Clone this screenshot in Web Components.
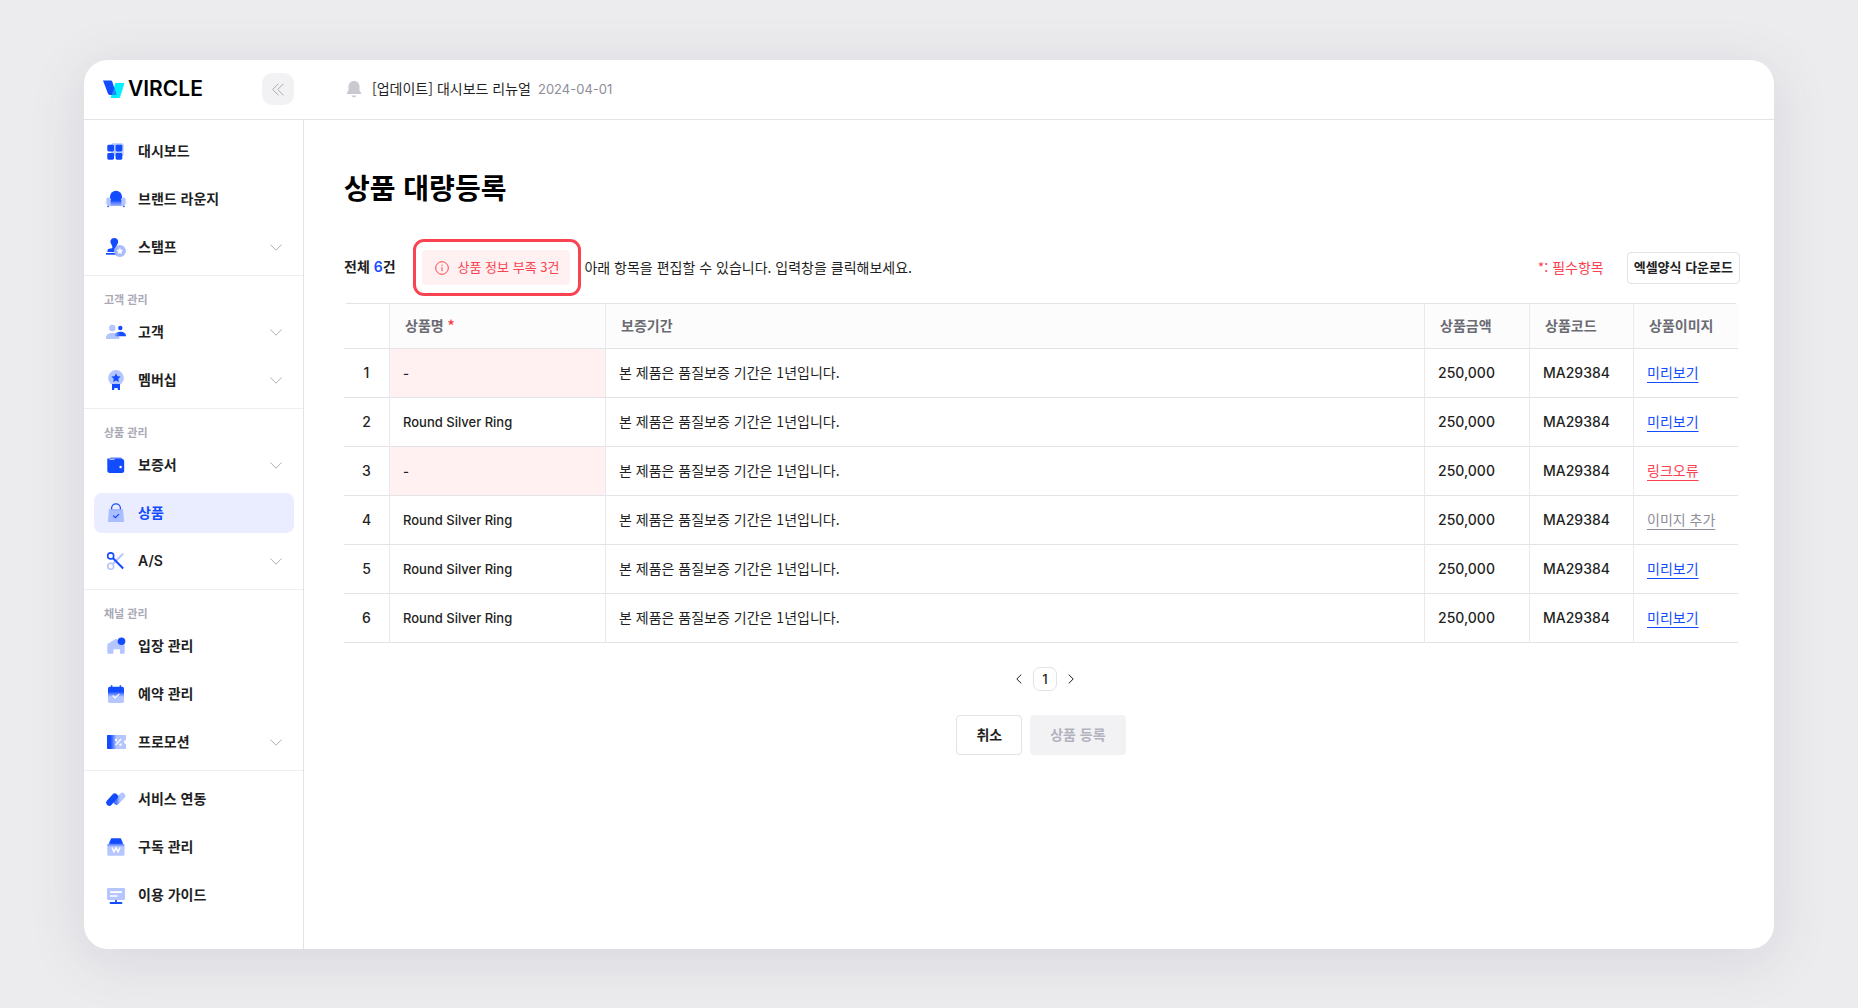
<!DOCTYPE html>
<html lang="ko">
<head>
<meta charset="utf-8">
<meta name="viewport" content="width=device-width, initial-scale=1">
<title>VIRCLE</title>
<style>
  html, body { margin: 0; height: 100%; }
  body {
    --kr: "Noto Sans CJK KR", "Noto Sans", sans-serif;
    --latin: Inter, "Noto Sans CJK KR", sans-serif;
    --ink: #1f1f24;
    --blue: #134bff;
    --red: #fa4350;
    --line: #e2e2e7;
    --gray: #8e8e99;
    font: 14px/20px var(--kr);
    color: var(--ink);
    background: #ececee;
  }
</style>
</head>
<body>
<vc-app>
  <vc-topbar slot="top"></vc-topbar>
  <vc-sidebar slot="side">
    <vc-nav-group>
      <vc-nav-item icon="dashboard">대시보드</vc-nav-item>
      <vc-nav-item icon="lounge">브랜드 라운지</vc-nav-item>
      <vc-nav-item icon="stamp" expandable>스탬프</vc-nav-item>
    </vc-nav-group>
    <vc-nav-group label="고객 관리">
      <vc-nav-item icon="customers" expandable>고객</vc-nav-item>
      <vc-nav-item icon="membership" expandable>멤버십</vc-nav-item>
    </vc-nav-group>
    <vc-nav-group label="상품 관리">
      <vc-nav-item icon="wallet" expandable>보증서</vc-nav-item>
      <vc-nav-item icon="bag" current>상품</vc-nav-item>
      <vc-nav-item icon="scissors" expandable latin>A/S</vc-nav-item>
    </vc-nav-group>
    <vc-nav-group label="채널 관리">
      <vc-nav-item icon="house">입장 관리</vc-nav-item>
      <vc-nav-item icon="calendar">예약 관리</vc-nav-item>
      <vc-nav-item icon="ticket" expandable>프로모션</vc-nav-item>
    </vc-nav-group>
    <vc-nav-group>
      <vc-nav-item icon="link">서비스 연동</vc-nav-item>
      <vc-nav-item icon="subscribe">구독 관리</vc-nav-item>
      <vc-nav-item icon="guide">이용 가이드</vc-nav-item>
    </vc-nav-group>
  </vc-sidebar>
  <vc-bulk-page>
    <span slot="title">상품 대량등록</span>
    <vc-toolbar slot="toolbar" total="6" missing="3"></vc-toolbar>
    <vc-product-table slot="table"></vc-product-table>
    <vc-pagination slot="pages" page="1"></vc-pagination>
    <vc-button slot="actions">취소</vc-button>
    <vc-button slot="actions" disabled>상품 등록</vc-button>
  </vc-bulk-page>
</vc-app>

<script>
const B = '#134bff', L = '#b5c6ff';
const ICONS = {
  dashboard: `<rect x="5" y="2.3" width="12.6" height="13" rx="2" fill="${L}"/><g fill="${B}"><rect x="1.3" y="3.7" width="6.7" height="6.7" rx="1.4"/><rect x="9.6" y="3.7" width="6.7" height="6.7" rx="1.4"/><rect x="1.3" y="12" width="6.7" height="6.7" rx="1.4"/><rect x="9.6" y="12" width="6.7" height="6.7" rx="1.4"/></g>`,
  lounge: `<defs><linearGradient id="g" x1="0" y1="0" x2="0" y2="1"><stop offset="0" stop-color="${B}"/><stop offset=".45" stop-color="#5a80ff"/><stop offset="1" stop-color="#9db3ff"/></linearGradient></defs><path d="M4 12V7.8a6 6 0 0 1 12 0V12z" fill="${B}"/><path d="M.3 10.6C.3 9.2 1.4 8.6 2.6 8.6S5 9.4 5 10.6V17H2.4C1.2 17 .6 16.2 .3 14z" fill="${L}"/><path d="M19.7 10.6C19.7 9.2 18.6 8.6 17.4 8.6S15 9.4 15 10.6V17h2.6c1.2 0 1.8-.8 2.1-3z" fill="${L}"/><rect x="4.6" y="11.3" width="10.8" height="5.7" fill="url(#g)"/><rect x="1.3" y="16.8" width="1.7" height="1.5" rx=".7" fill="${B}"/><rect x="17" y="16.8" width="1.7" height="1.5" rx=".7" fill="${B}"/>`,
  stamp: `<path d="M8.300 .9c2.200 0 3.900 1.700 3.900 3.800 0 1.800-1.300 2.600-1.700 4.300l-.3 2.500v3.500H1.400v-1.200c0-1.500 1.100-2.400 2.600-2.400h1.200c.9 0 1.300-.5 1.200-1.400C6.200 7.700 4.400 6.700 4.400 4.700c0-2.100 1.700-3.800 3.900-3.800z" fill="${B}"/><rect y="16" width="10.500" height="1.700" fill="${B}"/><circle cx="13.900" cy="14" r="6" fill="#9fb5ff" opacity=".9"/><path d="m13.900 10.700 1 2.100 2.300.3-1.700 1.600.4 2.300-2-1.100-2 1.100.4-2.300-1.700-1.600 2.300-.3z" fill="#fff"/>`,
  customers: `<defs><linearGradient id="g"><stop offset="0" stop-color="#8fa8ff"/><stop offset=".5" stop-color="${B}"/></linearGradient></defs><circle cx="6.300" cy="6" r="3.200" fill="${L}"/><path d="M0 17v-1.500C0 12.500 2.500 11 6.500 11s6.800 1.500 6.800 4.500V17z" fill="${L}"/><circle cx="14.300" cy="6" r="2.200" fill="${B}"/><path d="M8.600 14.300c0-3 2-4.600 5.600-4.600s5.800 1.600 5.800 4.600z" fill="url(#g)"/>`,
  membership: `<circle cx="10" cy="7.900" r="7.800" fill="${L}"/><path d="m10 3.200 1.400 3 3.200.4-2.300 2.200.5 3.300-2.800-1.600-2.800 1.600.5-3.300-2.300-2.200 3.200-.4z" fill="${B}"/><path d="M6 14h8v6h-2l-.5-2h-3L8 20H6z" fill="${B}"/>`,
  wallet: `<rect x="3.500" y="2.200" width="12.500" height="6" rx="1.500" fill="#8fa8ff"/><path d="M1.300 4.200c0-1 1.700-.6 2.700-.6h10.500c2.300 0 3.700 1 3.700 3V15.800c0 1.500-.9 2.200-2.200 2.200H3.700c-1.500 0-2.400-.8-2.400-2.400z" fill="${B}"/><path d="M3.500 4.300h5" stroke="#fff" stroke-width=".8"/><circle cx="14.600" cy="12" r="1.200" fill="#fff"/>`,
  bag: `<defs><linearGradient id="g" x1="0" y1="0" x2="0" y2="1"><stop offset="0" stop-color="#7090ff"/><stop offset=".45" stop-color="#aabdff"/></linearGradient></defs><path d="M5.600 9V5.200a4.400 4.400 0 0 1 8.800 0V9" fill="none" stroke="${B}" stroke-width="1.300"/><path d="M2.900 6.300h14.200l.9 11.400c0 .8-.4 1.300-1.200 1.300H3.200c-.8 0-1.200-.5-1.200-1.300z" fill="#aabdff"/><rect x="5" y="6.300" width="10" height="4" fill="url(#g)" opacity=".5"/><path d="m7.200 12.600 2.200 2.100 3.600-3.600" fill="none" stroke="${B}" stroke-width="1.300"/>`,
  scissors: `<g fill="none" stroke-width="1.600"><circle cx="4.700" cy="15.200" r="3" stroke="${L}"/><path d="M6.800 13 17.200 2.600" stroke="${L}" stroke-width="2"/><circle cx="4.700" cy="4.900" r="3" stroke="${B}"/><path d="m6.800 7 10.400 10.500" stroke="${B}" stroke-width="2"/></g>`,
  house: `<path d="M1.300 17V9.500c0-1 .3-1.500 1-2L8.800 3.400c.8-.5 1.600-.5 2.400 0l6.500 4.100c.7.500 1 1 1 2V17c0 .5-.2.700-.7.700h-4v-3.500c0-.6-.3-1-1-1H8.400c-.7 0-1 .4-1 1v3.500H2c-.5 0-.7-.2-.7-.7z" fill="${L}"/><circle cx="15.500" cy="5.200" r="3.800" fill="${B}"/>`,
  calendar: `<defs><linearGradient id="g" x1="0" y1="0" x2="0" y2="1"><stop offset=".3" stop-color="${B}"/><stop offset=".62" stop-color="${L}"/></linearGradient></defs><rect x="2" y="2.700" width="16" height="16.300" rx="1.800" fill="url(#g)"/><path d="M5.600 1.300v2.500M14.400 1.300v2.500" stroke="${B}" stroke-width="1.500"/><path d="m6.700 11.600 2.500 2.300 4.100-4" fill="none" stroke="#fff" stroke-width="1.300"/>`,
  ticket: `<defs><linearGradient id="g"><stop offset=".18" stop-color="${B}"/><stop offset=".5" stop-color="${L}"/></linearGradient></defs><path d="M2 3h17c.7 0 1 .3 1 1v4a2 2 0 0 0 0 4v4c0 .7-.3 1-1 1H2c-.7 0-1-.3-1-1V4c0-.7.3-1 1-1z" fill="url(#g)"/><path d="m9.500 13 5.500-6" stroke="#fff" stroke-width="1.200"/><circle cx="10" cy="8" r="1.200" fill="#fff"/><circle cx="14.500" cy="12.600" r="1.200" fill="#fff"/>`,
  link: `<defs><linearGradient id="g"><stop offset="0" stop-color="#5079ff"/><stop offset=".6" stop-color="${L}"/></linearGradient></defs><path d="m10.500 12.800 5.800-6" stroke="url(#g)" stroke-width="6" stroke-linecap="round"/><path d="M3.300 13.700 8.800 7.600" stroke="${B}" stroke-width="6.200" stroke-linecap="round"/>`,
  subscribe: `<defs><linearGradient id="g" x1="0" y1="0" x2="0" y2="1"><stop offset="0" stop-color="#4a74ff"/><stop offset=".25" stop-color="${L}"/></linearGradient></defs><path d="M5.200 1.300h9.600l1.900 4.200V9H3.300V5.500z" fill="${B}"/><rect x="1.300" y="6.800" width="17.200" height="12" rx="1.600" fill="url(#g)"/><path d="m6 10.500 1.900 4.300L10 10.800l2.100 4 1.900-4.300" fill="none" stroke="#fff" stroke-width="1.400"/>`,
  guide: `<rect x="1" y="3" width="18" height="12" rx="1.300" fill="${L}"/><path d="M4 7.100h12M4 11h7.500" stroke="#fff" stroke-width="1.700"/><path d="M10 15v3" stroke="${B}" stroke-width="1.700"/><path d="M4.500 18h11" stroke="${B}" stroke-width="1.800" stroke-linecap="round"/>`
};

/* Small base: each element supplies its own styles and markup. */
class VcElement extends HTMLElement {
  connectedCallback() {
    if (this.shadowRoot) return;
    const t = document.createElement('template');
    t.innerHTML = `<style>*{box-sizing:border-box}${this.styles()}</style>${this.markup()}`;
    this.attachShadow({ mode: 'open' }).append(t.content.cloneNode(true));
  }
}

customElements.define('vc-icon', class extends VcElement {
  styles() { return `:host{display:block;flex:none;width:20px;height:20px} svg{display:block;width:100%;height:100%;overflow:visible}`; }
  markup() { return `<svg viewBox="0 0 20 20" aria-hidden="true">${ICONS[this.getAttribute('name')]}</svg>`; }
});

customElements.define('vc-app', class extends VcElement {
  styles() { return `
    :host{display:flex;min-height:100vh;padding:60px 84px 59px;box-sizing:border-box}
    .card{flex:1;min-width:0;display:flex;flex-direction:column;background:#fff;border-radius:24px;overflow:hidden;
      box-shadow:0 10px 56px rgba(70,60,110,.13)}
    .body{flex:1;display:flex;min-height:0}
    main{flex:1;min-width:0}`; }
  markup() { return `<div class="card"><slot name="top"></slot><div class="body"><slot name="side"></slot><main><slot></slot></main></div></div>`; }
});

customElements.define('vc-topbar', class extends VcElement {
  styles() { return `
    :host{display:block}
    header{display:flex;align-items:center;height:60px;padding-bottom:1px;border-bottom:1px solid var(--line)}
    .brand{display:flex;align-items:center;justify-content:space-between;width:220px;padding:0 10px 0 19px}
    .logo{display:flex;align-items:center;gap:3px;color:#000;text-decoration:none;font:600 21px/24px var(--latin)}
    button{display:grid;place-items:center;width:32px;height:32px;padding:0;border:0;border-radius:10px;background:#f2f2f4}
    svg{display:block}
    .notice{display:flex;align-items:center;padding-left:42px;color:var(--ink);text-decoration:none}
    .notice span{margin-left:10px;padding-bottom:2px}
    time{margin-left:7px;color:var(--gray);font:13px/20px var(--latin)}`; }
  markup() { return `<header>
    <div class="brand">
      <a class="logo" href="#"><svg width="22" height="18" viewBox="0 0 22 18" aria-hidden="true"><path d="M12.300 3h9.200l-4.200 13.500C17 17.500 16.500 18 15.500 18H7.500z" fill="#00f0ff"/><path d="M0 .5h7.500c1 0 1.500.4 1.800 1.200L13.500 15H7.300C6 15 5.200 14.300 4.800 13.200z" fill="${B}"/><path d="M11.200 7.500 13.500 15H8.600z" fill="#1b8dff"/></svg><span>VIRCLE</span></a>
      <button aria-label="메뉴 접기"><svg width="12" height="13" viewBox="0 0 12 13" fill="none" stroke="#a9a9b2"><path d="M6.500.7.7 6.500l5.800 5.800M11.500.7 5.700 6.500l5.800 5.800"/></svg></button>
    </div>
    <a class="notice" href="#"><svg width="16" height="18" viewBox="0 0 16 18" fill="#c9c9d1" aria-hidden="true"><path d="M8 1c3.400 0 5.500 2.500 5.500 5.800v3.600l1.700 2.400c.3.600.1 1.200-.6 1.200H1.400c-.7 0-.9-.6-.6-1.200l1.700-2.400V6.800C2.500 3.500 4.600 1 8 1zM5.600 15.400h4.800c-.4 1.300-1.200 1.900-2.400 1.900s-2-.6-2.400-1.900z"/></svg><span>[업데이트] 대시보드 리뉴얼</span><time datetime="2024-04-01">2024-04-01</time></a>
  </header>`; }
});

customElements.define('vc-sidebar', class extends VcElement {
  styles() { return `:host{display:block;flex:none;width:220px;box-sizing:border-box;padding-top:3px;border-right:1px solid var(--line)}`; }
  markup() { return `<nav><slot></slot></nav>`; }
});

customElements.define('vc-nav-group', class extends VcElement {
  styles() { return `
    :host{display:block;padding:8px 0;border-bottom:1px solid #efeff2}
    :host(:last-of-type){border-bottom:0}
    :host([label]){padding-top:15px}
    h2{margin:0 20px 5px;font:600 11px/16px var(--kr);color:#a9a9b6}
    .items{display:flex;flex-direction:column;gap:8px;padding:0 9px 0 10px}`; }
  markup() {
    const l = this.getAttribute('label');
    return `${l ? `<h2>${l}</h2>` : ''}<div class="items"><slot></slot></div>`;
  }
});

customElements.define('vc-nav-item', class extends VcElement {
  styles() { return `
    :host{display:block}
    a{display:flex;align-items:center;gap:12px;height:40px;padding:0 12px;border-radius:8px;color:var(--ink);text-decoration:none;font:600 14px/20px var(--kr)}
    :host([current]) a{background:#eaedff;color:var(--blue)}
    span{flex:1;padding-bottom:2px}
    :host([latin]) a{font-family:var(--latin)}
    :host([latin]) span{padding:0}`; }
  markup() {
    return `<a href="#"${this.hasAttribute('current') ? ' aria-current="page"' : ''}><vc-icon name="${this.getAttribute('icon')}"></vc-icon><span><slot></slot></span>${
      this.hasAttribute('expandable') ? `<svg width="12" height="7" viewBox="0 0 12 7" fill="none" stroke="#b0b0ba" aria-hidden="true"><path d="m.4 .5 5.600 5.700L11.600 .5"/></svg>` : ''}</a>`;
  }
});

customElements.define('vc-bulk-page', class extends VcElement {
  styles() { return `
    :host{display:block;padding:47px 34px 40px 40px}
    h1{margin:0 0 32px;font:700 28px/40px var(--kr);color:#000}
    .body{padding-right:2px}
    .pages{display:flex;justify-content:center;padding:24px 0 24px 8px}
    .actions{display:flex;justify-content:center;gap:8px}`; }
  markup() { return `<h1><slot name="title"></slot></h1><slot name="toolbar"></slot>
    <div class="body"><slot name="table"></slot>
    <div class="pages"><slot name="pages"></slot></div>
    <div class="actions"><slot name="actions"></slot></div></div>`; }
});

customElements.define('vc-toolbar', class extends VcElement {
  styles() { return `
    :host{display:flex;align-items:center;margin-bottom:7px}
    .total{font-weight:600;margin-right:17px}
    .total,p,.req{padding-bottom:2px}
    b{color:var(--blue);font:600 14px/20px var(--latin)}
    .focus{padding:8px 8px 8px 6px;border:3px solid var(--red);border-radius:11px}
    .warn{display:flex;align-items:center;gap:9px;height:35px;padding:0 11px 0 13px;border:0;border-radius:4px;background:#fff1f2;color:var(--red);font:13px/20px var(--kr)}
    .warn span{padding-bottom:2px}
    svg{display:block}
    p{flex:1;margin:0 0 0 3px}
    .req{color:var(--red);margin-right:23px}
    .dl{height:32px;padding:0 6px 2px;border:1px solid var(--line);border-radius:4px;background:#fff;color:var(--ink);font:600 13px/20px var(--kr)}`; }
  markup() { return `
    <span class="total">전체 <b>${this.getAttribute('total')}</b>건</span>
    <div class="focus"><button class="warn"><svg width="14" height="14" viewBox="0 0 14 14" fill="none" stroke="#fa4350" aria-hidden="true"><circle cx="7" cy="7" r="6.300"/><path d="M7 6.200v4M7 3.700v1.200"/></svg><span>상품 정보 부족 ${this.getAttribute('missing')}건</span></button></div>
    <p>아래 항목을 편집할 수 있습니다. 입력창을 클릭해보세요.</p>
    <span class="req">*: 필수항목</span>
    <button class="dl">엑셀양식 다운로드</button>`; }
});

customElements.define('vc-product-table', class extends VcElement {
  styles() { return `
    :host{display:block}
    table{width:100%;table-layout:fixed;border-collapse:separate;border-spacing:0;border-top:1px solid var(--line);border-radius:4px 4px 0 0}
    th,td{padding:0 13px 2px;text-align:left;border-bottom:1px solid var(--line);border-right:1px solid #e9e9ef}
    tr>:last-child{border-right:0}
    thead th{height:45px;padding:0 15px 2px;background:#fcfcfc;color:#6b6b73;font-weight:600}
    thead td{height:45px;background:#fff}
    tbody td,tbody th{height:49px}
    tbody th{padding:0;text-align:center;font:500 14px/20px var(--latin)}
    .num,.name{padding-bottom:0;font:500 14px/20px var(--latin)}
    .name{font-size:13px}
    .empty{background:#fff1f1}
    i{color:var(--red);font-style:normal}
    a{color:var(--blue);text-underline-offset:4px;text-decoration-thickness:1px}
    a.error{color:var(--red)} a.add{color:var(--gray)}
    .n{width:46px}.p{width:216px}.amount{width:105px}.w{width:104px}`; }
  markup() {
    const view = ['', '미리보기'], err = ['error', '링크오류'], add = ['add', '이미지 추가'];
    const rows = [['-', view], ['Round Silver Ring', view], ['-', err], ['Round Silver Ring', add], ['Round Silver Ring', view], ['Round Silver Ring', view]];
    return `<table><colgroup><col class="n"><col class="p"><col><col class="amount"><col class="w"><col class="w"></colgroup>
    <thead><tr><td></td><th scope="col">상품명 <i>*</i></th><th scope="col">보증기간</th><th scope="col">상품금액</th><th scope="col">상품코드</th><th scope="col">상품이미지</th></tr></thead>
    <tbody>${rows.map(([name, [cls, text]], i) => `<tr><th scope="row">${i + 1}</th><td class="name${name === '-' ? ' empty' : ''}">${name}</td><td>본 제품은 품질보증 기간은 1년입니다.</td><td class="num">250,000</td><td class="num">MA29384</td><td><a href="#" class="${cls}">${text}</a></td></tr>`).join('')}</tbody></table>`;
  }
});

customElements.define('vc-pagination', class extends VcElement {
  styles() { return `
    :host{display:block}
    nav{display:flex;align-items:center;gap:2px}
    button{display:grid;place-items:center;width:24px;height:24px;padding:0;border:0;background:none}
    a{display:grid;place-items:center;width:24px;height:24px;border:1px solid var(--line);border-radius:7px;color:var(--ink);text-decoration:none;font:500 13px/20px var(--latin)}`; }
  markup() {
    const arrow = d => `<svg width="6" height="10" viewBox="0 0 6 10" fill="none" stroke="#1f1f24"><path d="${d}"/></svg>`;
    return `<nav aria-label="페이지"><button aria-label="이전">${arrow('M5.3 .6 .8 5l4.500 4.400')}</button><a href="#" aria-current="page">${this.getAttribute('page')}</a><button aria-label="다음">${arrow('M.7 .6 5.200 5 .7 9.400')}</button></nav>`;
  }
});

customElements.define('vc-button', class extends VcElement {
  styles() { return `
    :host{display:block}
    button{height:40px;padding:0 19px 2px;border:1px solid var(--line);border-radius:4px;background:#fff;color:var(--ink);font:600 14px/20px var(--kr)}
    button:disabled{background:#f2f2f4;border-color:#f2f2f4;color:#b3b3bf}`; }
  markup() { return `<button${this.hasAttribute('disabled') ? ' disabled' : ''}><slot></slot></button>`; }
});
</script>
</body>
</html>
